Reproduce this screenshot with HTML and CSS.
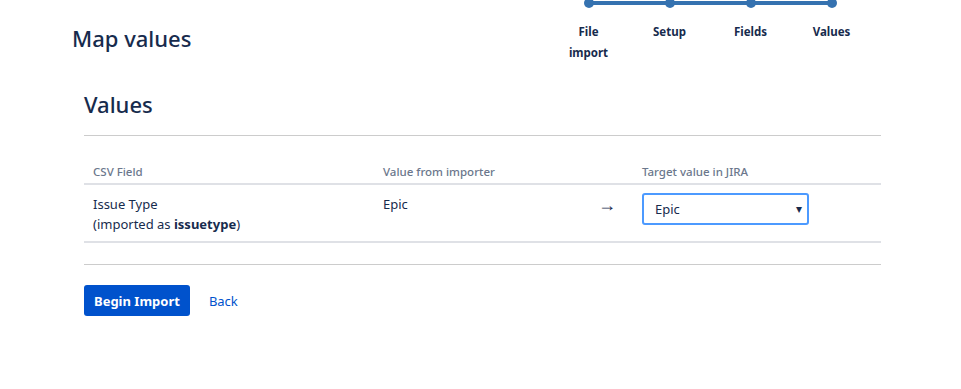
FILE: index.html
```html
<!DOCTYPE html>
<html lang="en">
<head>
    <meta charset="UTF-8">
    <meta name="viewport" content="width=device-width, initial-scale=1.0">
    <title>Map values</title>
    <link rel="stylesheet" href="styles.css">
</head>
<body>

<div class="page-header">
    <h1>Map values</h1>
    <ol class="tracker">
        <li class="tracker-step">File import</li>
        <li class="tracker-step">Setup</li>
        <li class="tracker-step">Fields</li>
        <li class="tracker-step">Values</li>
    </ol>
</div>

<div class="content">
    <h2>Values</h2>
    <hr>

    <table class="mapping">
        <thead>
            <tr>
                <th class="col-field">CSV Field</th>
                <th class="col-value">Value from importer</th>
                <th class="col-arrow"></th>
                <th class="col-target">Target value in JIRA</th>
            </tr>
        </thead>
        <tbody>
            <tr>
                <td>Issue Type<br>(imported as <strong>issuetype</strong>)</td>
                <td>Epic</td>
                <td class="arrow">&rarr;</td>
                <td>
                    <span class="select-wrap">
                        <select class="select">
                            <option>Epic</option>
                        </select>
                        <span class="caret">&#9662;</span>
                    </span>
                </td>
            </tr>
        </tbody>
    </table>

    <hr class="footer-rule">

    <div class="buttons">
        <button class="button-primary">Begin Import</button>
        <a href="#" class="button-link">Back</a>
    </div>
</div>

</body>
</html>
```

FILE: styles.css
```css
body {
    margin: 0;
    font-family: "Noto Sans", "Open Sans", sans-serif;
    font-size: 13px;
    color: #172b4d;
    background: white;
}
.page-header {
    display: flex;
    justify-content: space-between;
    align-items: flex-start;
    padding: 0 89px 0 72px;
}
.page-header h1 {
    margin: 0;
    padding-top: 22px;
    font-size: 22px;
    line-height: 32px;
    font-weight: 500;
}
.tracker {
    display: flex;
    list-style: none;
    margin: 0;
    padding: 0;
}
.tracker-step {
    position: relative;
    width: 81px;
    padding: 21px 14px 0;
    box-sizing: border-box;
    text-align: center;
    font-size: 11.5px;
    font-weight: 700;
    line-height: 21px;
}
.tracker-step::before {
    content: "";
    position: absolute;
    top: 1px;
    left: 0;
    right: 0;
    height: 4px;
    background: #3572b0;
}
.tracker-step:first-child::before {
    left: 50%;
}
.tracker-step:last-child::before {
    right: 50%;
}
.tracker-step::after {
    content: "";
    position: absolute;
    top: -2px;
    left: 50%;
    width: 10px;
    height: 10px;
    margin-left: -5px;
    border-radius: 50%;
    background: #3572b0;
}
.content {
    margin: 0 80px 0 84px;
    width: 797px;
}
.content h2 {
    margin: 25px 0 0;
    font-size: 22px;
    line-height: 32px;
    font-weight: 500;
}
hr {
    border: none;
    border-top: 1px solid #ccc;
    margin: 15px 0 0;
}
.mapping {
    width: 100%;
    margin-top: 21px;
    border-collapse: collapse;
}
.mapping th {
    text-align: left;
    font-size: 11.5px;
    font-weight: 500;
    color: #6b778c;
    padding: 6px 9px 3px;
    line-height: 17px;
    border-bottom: 2px solid #dfe1e6;
}
.col-field { width: 272px; }
.col-value { width: 198px; }
.col-arrow { width: 25px; }
.mapping td {
    vertical-align: top;
    padding: 9px 9px 7px;
    line-height: 20px;
    border-bottom: 2px solid #dfe1e6;
}
.mapping td.arrow {
    padding-left: 8px;
    font-size: 18px;
}
.select-wrap {
    position: relative;
    display: block;
    width: 167px;
    margin-top: -1px;
    margin-bottom: 1px;
}
.select {
    -webkit-appearance: none;
    appearance: none;
    display: block;
    width: 167px;
    height: 32px;
    padding: 0 24px 0 11px;
    font-family: inherit;
    font-size: 13px;
    color: #172b4d;
    background: white;
    border: 2px solid #4c9aff;
    border-radius: 3px;
    outline: none;
}
.caret {
    position: absolute;
    right: 7px;
    top: 6px;
    font-size: 12px;
    color: #172b4d;
    pointer-events: none;
}
.footer-rule {
    margin-top: 21px;
}
.buttons {
    display: flex;
    align-items: center;
    gap: 19px;
    margin-top: 20px;
}
.button-primary {
    height: 31px;
    padding: 0 10px;
    border: none;
    border-radius: 3px;
    background-color: #0052cc;
    color: white;
    font-family: inherit;
    font-size: 13px;
    font-weight: 700;
    cursor: pointer;
}
.button-link {
    color: #0052cc;
    text-decoration: none;
    font-size: 13px;
}
```
